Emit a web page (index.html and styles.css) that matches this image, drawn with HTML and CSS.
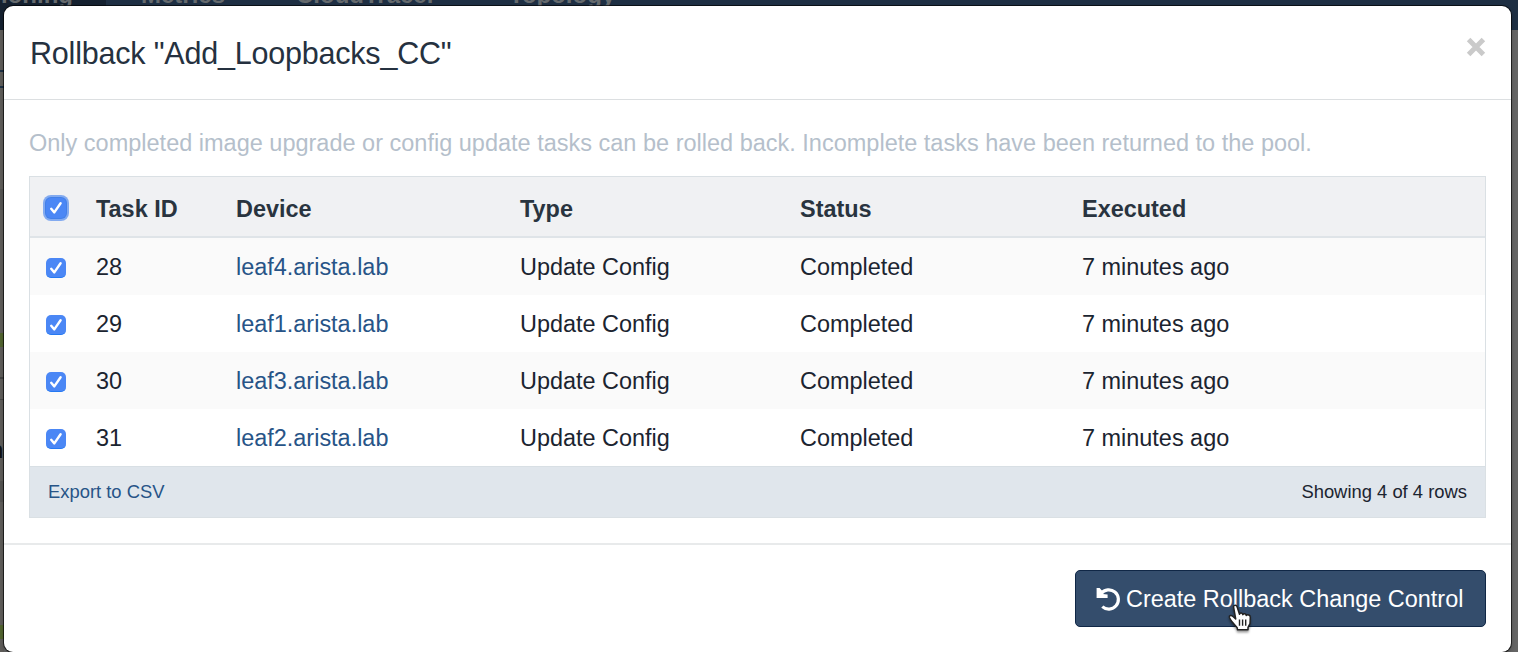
FILE: index.html
```html
<!DOCTYPE html>
<html lang="en">
<head>
<meta charset="utf-8">
<title>Rollback</title>
<link rel="stylesheet" href="styles.css">
</head>
<body>
<div class="backdrop">
  <nav class="nav"><span class="tab active">ioning</span><span class="tab metrics">Metrics</span><span class="tab cloud">CloudTracer</span><span class="tab topology">Topology</span></nav>
  <div class="page"></div>
  <span class="behind-letter">n</span>
</div>
<section class="modal">
  <header class="modal-header">
    <h1>Rollback "Add_Loopbacks_CC"</h1>
    <button class="close" aria-label="Close"><svg width="20" height="20" viewBox="0 0 20 20"><path d="M2.6 2.6L17.4 17.4M17.4 2.6L2.6 17.4" stroke="#cacaca" stroke-width="5"/></svg></button>
  </header>
  <div class="modal-body">
    <p class="note">Only completed image upgrade or config update tasks can be rolled back. Incomplete tasks have been returned to the pool.</p>
    <div class="table">
      <div class="row head"><span class="check focus"><svg viewBox="0 0 20 20"><path d="M5.2 10.8L8.3 14.4L14.6 5.2"/></svg></span><span>Task ID</span><span>Device</span><span>Type</span><span>Status</span><span>Executed</span></div>
      <div class="row odd"><span class="check"><svg viewBox="0 0 20 20"><path d="M5.2 10.8L8.3 14.4L14.6 5.2"/></svg></span><span>28</span><a>leaf4.arista.lab</a><span>Update Config</span><span>Completed</span><span>7 minutes ago</span></div>
      <div class="row"><span class="check"><svg viewBox="0 0 20 20"><path d="M5.2 10.8L8.3 14.4L14.6 5.2"/></svg></span><span>29</span><a>leaf1.arista.lab</a><span>Update Config</span><span>Completed</span><span>7 minutes ago</span></div>
      <div class="row odd"><span class="check"><svg viewBox="0 0 20 20"><path d="M5.2 10.8L8.3 14.4L14.6 5.2"/></svg></span><span>30</span><a>leaf3.arista.lab</a><span>Update Config</span><span>Completed</span><span>7 minutes ago</span></div>
      <div class="row"><span class="check"><svg viewBox="0 0 20 20"><path d="M5.2 10.8L8.3 14.4L14.6 5.2"/></svg></span><span>31</span><a>leaf2.arista.lab</a><span>Update Config</span><span>Completed</span><span>7 minutes ago</span></div>
      <div class="table-foot"><a>Export to CSV</a><span class="count">Showing 4 of 4 rows</span></div>
    </div>
  </div>
  <footer class="modal-footer">
    <button class="primary"><svg class="undo" width="25" height="25" viewBox="0 0 25 25"><path class="arc" d="M5.2 6.6A9.6 9.6 0 1 1 6.3 19.6"/><path class="tip" d="M.6 .9L3.6 .9L6.8 4.6L6.8 7L11.6 7.6L11.6 11L.6 11Z"/></svg><span>Create Rollback Change Control</span></button>
  </footer>
</section>
<svg class="cursor" width="26" height="30" viewBox="0 0 26 30"><path d="M5.6 3.2C5 1.3 8.2.5 9 2.5L11.5 10.2C12 8.5 14.4 8.8 14.8 10.7C15.6 9 18 9.5 18.2 11.4C19.6 10.1 22.3 11 22.3 13.2L22 19.7L20 23.3L20 25.8L9.5 25.8L9.2 23.8L3.4 17L1.4 13.5C.8 11.5 3.2 10.5 5 12.5L7.7 15Z" fill="#fff" stroke="#222" stroke-width="1.5" stroke-linejoin="round"/><path d="M11.5 15.5V21.8M14.6 15.5V21.8M17.7 15.5V21.8" stroke="#222" stroke-width="1.4"/></svg>
</body>
</html>
```
FILE: styles.css
```css
* { box-sizing: border-box; }
body { margin: 0; width: 1518px; height: 652px; overflow: hidden; position: relative; font-family: "Liberation Sans", Arial, sans-serif; font-size: 23.45px; color: #1b2430; }
button { font: inherit; border: 0; padding: 0; background: none; }
.backdrop { position: absolute; inset: 0; background: #656565; overflow: hidden; }
.nav { height: 30px; background: #1e2f43; display: flex; color: #656a6d; font-size: 24px; font-weight: bold; line-height: 28px; }
.tab { margin-top: -19px; height: 49px; white-space: nowrap; }
.tab.active { width: 106px; background: #152130; padding-left: 1px; }
.metrics { width: 156px; padding-left: 35px; }
.cloud { width: 213px; padding-left: 34px; }
.topology { width: 200px; padding-left: 34px; }
.page { width: 4px; height: 622px; background: linear-gradient(#5f5d5a 0 40px, #1d3045 40px 42px, #5f5d5a 42px 56px, #1d3045 56px 58px, #5f5d5a 58px 159px, #565553 159px 180px, #5f5d5a 180px 303px, #52642f 303px 317px, #5f5d5a 317px 347px, #444 347px 349px, #5f5d5a 349px 369px, #484846 369px 370px, #5f5d5a 370px 451px, #555452 451px 472px, #5f5d5a 472px 595px, #52642f 595px 609px, #5f5d5a 609px); }
.behind-letter { position: absolute; left: -11px; top: 437px; font-weight: bold; color: #111; line-height: 26px; }
.modal { position: absolute; left: 4px; top: 6px; width: 1507px; height: 646px; background: #fff; border-radius: 9px; box-shadow: 0 0 0 1px rgba(0,0,0,.65), 0 3px 5px rgba(0,0,0,.25); }
.modal-header { height: 94px; border-bottom: 1px solid #dcdfe1; padding: 0 25px 0 26px; display: flex; justify-content: space-between; }
h1 { margin: 0; padding-top: 29px; font-size: 30.5px; letter-spacing: -.2px; line-height: 36px; font-weight: normal; color: #253140; white-space: nowrap; }
.close { height: 20px; padding-top: 31px; line-height: 0; }
.modal-body { height: 445px; padding: 29px 25px 0; border-bottom: 2px solid #e8eaeb; }
.note { margin: 0; height: 47px; line-height: 28px; font-size: 23.5px; color: #b5bfcb; white-space: nowrap; }
.table { border: 1px solid #dae0e4; height: 342px; width: 1457px; }
.row { height: 57px; display: grid; grid-template-columns: 66px 140px 284px 280px 282px 1fr; align-items: center; line-height: 28px; }
.odd { background: #fafafa; }
.head { height: 61px; padding-top: 4px; background: #f0f1f3; border-bottom: 2px solid #dfe4e8; font-weight: bold; color: #29343f; }
.check { width: 20px; height: 20px; margin-left: 16px; border-radius: 5px; background: #4b87f5; border-bottom: 1px solid #2579f2; position: relative; top: 1px; }
.check svg { display: block; width: 20px; height: 20px; fill: none; stroke: #fff; stroke-width: 2.4; stroke-linecap: round; stroke-linejoin: round; }
.check.focus { top: -1px; border: 0; box-shadow: 0 0 0 1px #4380e8, 0 0 0 3px #82aaf0; }
a { color: #275487; }
.table-foot { height: 51px; border-top: 1px solid #d8dfe4; background: #e0e6ec; padding: 0 18px; font-size: 18.4px; display: flex; align-items: center; justify-content: space-between; }
.modal-footer { height: 107px; padding: 25px 25px 0; display: flex; justify-content: flex-end; align-items: flex-start; }
.primary { width: 411px; height: 57px; padding: 1px 0 0 20px; border: 1px solid #102746; border-radius: 5px; background: #344d6c; color: #fff; display: flex; align-items: center; white-space: nowrap; }
.undo { margin-right: 5px; fill: none; stroke: #fff; stroke-width: 3.2; }
.undo .tip { fill: #fff; stroke: none; }
.cursor { position: absolute; left: 1228px; top: 604px; filter: drop-shadow(0 2px 1px rgba(0,0,0,.4)); }
```
